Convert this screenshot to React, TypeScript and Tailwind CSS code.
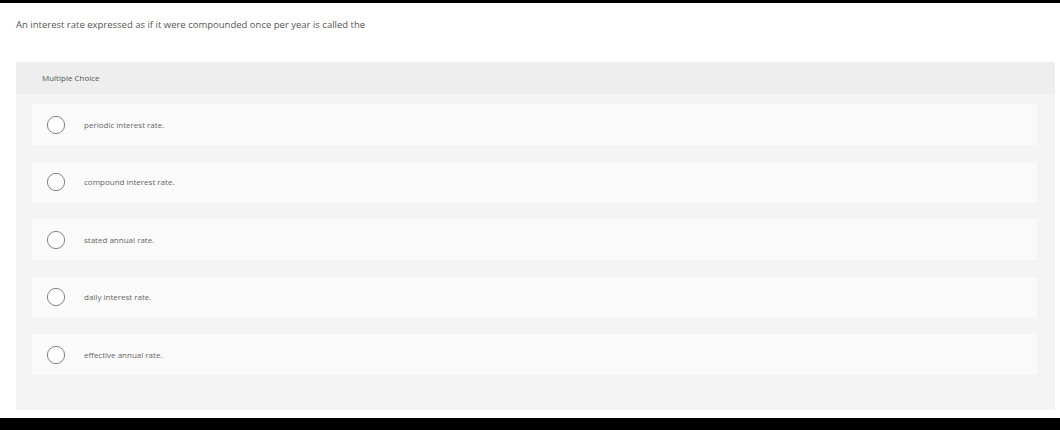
const options = [
  "periodic interest rate.",
  "compound interest rate.",
  "stated annual rate.",
  "daily interest rate.",
  "effective annual rate.",
];

const Radio = () => (
  <svg width="20" height="20" viewBox="0 0 20 20" className="shrink-0">
    <circle cx="10" cy="10" r="8.6" fill="#ffffff" stroke="#7a8490" strokeWidth="1" />
  </svg>
);

export default function App() {
  return (
    <div
      className="w-[1060px] h-[430px] bg-white flex flex-col overflow-hidden"
      style={{ fontFamily: "'Open Sans', Lato, sans-serif" }}
    >
      <div className="h-[3px] bg-black shrink-0" />
      <p className="pl-4 pt-[16px] h-[59px] text-[9.5px] leading-[11px] text-[#555]">
        An interest rate expressed as if it were compounded once per year is called the
      </p>
      <div className="ml-4 w-[1039px] h-[348px] bg-[#f4f4f4] flex flex-col">
        <div className="h-[32px] bg-[#eeeeee] flex items-center pl-[26px] text-[8px] text-[#555]">
          Multiple Choice
        </div>
        <div className="flex flex-col gap-[16.5px] pt-[10px] px-4">
          {options.map((o) => (
            <div
              key={o}
              className="h-[41px] w-[1005px] bg-[#fafafa] flex items-center pl-[14px] gap-[18px]"
            >
              <Radio />
              <span className="text-[8px] text-[#666]">{o}</span>
            </div>
          ))}
        </div>
      </div>
      <div className="flex-1 mt-[8px] bg-black" />
    </div>
  );
}
